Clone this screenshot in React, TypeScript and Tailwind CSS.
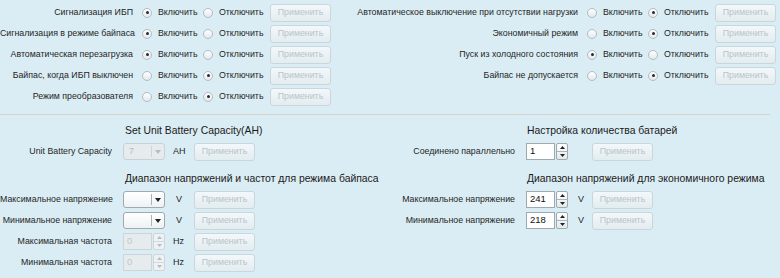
import React from "react";

function Radio({ checked, label }: { checked: boolean; label: string }) {
  return (
    <div className="flex items-center gap-[6px]">
      <span className="w-[10px] h-[10px] rounded-full border border-[#b3bcc1] bg-gradient-to-b from-white to-[#e3e9ec] grid place-items-center shrink-0">
        {checked && <span className="w-[3px] h-[3px] rounded-full bg-[#2a2a2a]" />}
      </span>
      <span className="text-[8.8px] text-[#1f1f1f] whitespace-nowrap">{label}</span>
    </div>
  );
}

function ApplyBtn() {
  return (
    <div className="w-[61px] h-[18px] rounded-[3px] border border-[#c9d6dc] bg-gradient-to-b from-[#f3f8fa] to-[#e3ecf0] text-[8.8px] text-[#b7c4ca] grid place-items-center shrink-0">
      Применить
    </div>
  );
}

function ToggleRow({ label, on, labelW }: { label: string; on: boolean; labelW: string }) {
  return (
    <div className="h-[21px] flex items-center">
      <div className={`${labelW} shrink-0 text-right text-[8.8px] text-[#1f1f1f] whitespace-nowrap pr-[9px]`}>{label}</div>
      <div className="w-[61px] shrink-0">
        <Radio checked={on} label="Включить" />
      </div>
      <div className="w-[67px] shrink-0">
        <Radio checked={!on} label="Отключить" />
      </div>
      <ApplyBtn />
    </div>
  );
}

function Combo({ value, disabled }: { value?: string; disabled?: boolean }) {
  return (
    <div
      className={`w-[42px] h-[17px] rounded-[3px] border flex items-center ${
        disabled ? "border-[#c8d2d6] bg-[#e6ebed]" : "border-[#9eaab0] bg-gradient-to-b from-white to-[#eef2f4]"
      }`}
    >
      <div className={`flex-1 pl-[5px] text-[8.8px] ${disabled ? "text-[#b4bcc0]" : "text-[#222]"}`}>{value}</div>
      <div className={`w-px h-[11px] ${disabled ? "bg-[#cdd5d9]" : "bg-[#aab4b9]"}`} />
      <div className="w-[12px] grid place-items-center">
        <svg width="6" height="4" viewBox="0 0 6 4">
          <polygon points="0,0 6,0 3,4" fill={disabled ? "#b4bcc0" : "#222"} />
        </svg>
      </div>
    </div>
  );
}

function Spin({ value, disabled }: { value: string; disabled?: boolean }) {
  const c = disabled ? "#b4bcc0" : "#222";
  return (
    <div className="flex items-center h-[17px]">
      <div
        className={`w-[29px] h-[17px] border flex items-center pl-[3px] text-[9.5px] ${
          disabled ? "border-[#ccd5d9] bg-[#e6ebed] text-[#c0c7ca]" : "border-[#9eaab0] bg-white text-[#111]"
        }`}
      >
        {value}
      </div>
      <div
        className={`w-[12px] h-[17px] ml-px rounded-[2px] border flex flex-col ${
          disabled ? "border-[#cdd6da] bg-[#eef2f4]" : "border-[#9eaab0] bg-gradient-to-b from-white to-[#e4eaed]"
        }`}
      >
        <div className="flex-1 grid place-items-center">
          <svg width="5" height="3" viewBox="0 0 5 3">
            <polygon points="0,3 5,3 2.5,0" fill={c} />
          </svg>
        </div>
        <div className={`h-px ${disabled ? "bg-[#d3dadd]" : "bg-[#aab4b9]"}`} />
        <div className="flex-1 grid place-items-center">
          <svg width="5" height="3" viewBox="0 0 5 3">
            <polygon points="0,0 5,0 2.5,3" fill={c} />
          </svg>
        </div>
      </div>
    </div>
  );
}

function FieldRow({
  label,
  labelW,
  control,
  unit,
  unitW,
}: {
  label: string;
  labelW: string;
  control: React.ReactNode;
  unit: string;
  unitW: string;
}) {
  return (
    <div className="h-[21px] flex items-center">
      <div className={`${labelW} shrink-0 text-right text-[8.8px] text-[#1f1f1f] whitespace-nowrap pr-[11px]`}>{label}</div>
      <div className="w-[42px] shrink-0">{control}</div>
      <div className={`${unitW} shrink-0 text-[9px] text-[#1f1f1f]`}>{unit}</div>
      <ApplyBtn />
    </div>
  );
}

function Heading({ children, ml }: { children: React.ReactNode; ml: string }) {
  return <div className={`h-[20px] flex items-center ${ml} text-[10.4px] text-[#1a1a1a] whitespace-nowrap`}>{children}</div>;
}

export default function App() {
  return (
    <div className="w-[780px] h-[278px] bg-[#dbedf4] overflow-hidden font-['Liberation_Sans',Arial,sans-serif]">
      <div className="flex pt-[2px]">
        <div className="w-[340px]">
          <ToggleRow label="Сигнализация ИБП" on labelW="w-[142px]" />
          <ToggleRow label="Сигнализация в режиме байпаса" on labelW="w-[142px]" />
          <ToggleRow label="Автоматическая перезагрузка" on labelW="w-[142px]" />
          <ToggleRow label="Байпас, когда ИБП выключен" on={false} labelW="w-[142px]" />
          <ToggleRow label="Режим преобразователя" on={false} labelW="w-[142px]" />
        </div>
        <div>
          <ToggleRow label="Автоматическое выключение при отсутствии нагрузки" on={false} labelW="w-[247px]" />
          <ToggleRow label="Экономичный режим" on={false} labelW="w-[247px]" />
          <ToggleRow label="Пуск из холодного состояния" on labelW="w-[247px]" />
          <ToggleRow label="Байпас не допускается" on={false} labelW="w-[247px]" />
        </div>
      </div>

      <div className="mt-[7px] w-[770px] h-px bg-[#d8d2c8]" />

      <div className="flex pt-[6px]">
        <div className="w-[390px] shrink-0">
          <Heading ml="ml-[125px]">Set Unit Battery Capacity(AH)</Heading>
          <FieldRow label="Unit Battery Capacity" labelW="w-[123px]" control={<Combo value="7" disabled />} unit="AH" unitW="w-[29px] pl-[8px]" />
          <div className="mt-[7px]">
            <Heading ml="ml-[125px]">Диапазон напряжений и частот для режима байпаса</Heading>
          </div>
          <FieldRow label="Максимальное напряжение" labelW="w-[123px]" control={<Combo />} unit="V" unitW="w-[29px] pl-[11px]" />
          <FieldRow label="Минимальное напряжение" labelW="w-[123px]" control={<Combo />} unit="V" unitW="w-[29px] pl-[11px]" />
          <FieldRow label="Максимальная частота" labelW="w-[123px]" control={<Spin value="0" disabled />} unit="Hz" unitW="w-[29px] pl-[8px]" />
          <FieldRow label="Минимальная частота" labelW="w-[123px]" control={<Spin value="0" disabled />} unit="Hz" unitW="w-[29px] pl-[8px]" />
        </div>
        <div>
          <Heading ml="ml-[137px]">Настройка количества батарей</Heading>
          <FieldRow label="Соединено параллельно" labelW="w-[136px]" control={<Spin value="1" />} unit="" unitW="w-[24px]" />
          <div className="mt-[7px]">
            <Heading ml="ml-[137px]">Диапазон напряжений для экономичного режима</Heading>
          </div>
          <FieldRow label="Максимальное напряжение" labelW="w-[136px]" control={<Spin value="241" />} unit="V" unitW="w-[24px] pl-[10px]" />
          <FieldRow label="Минимальное напряжение" labelW="w-[136px]" control={<Spin value="218" />} unit="V" unitW="w-[24px] pl-[10px]" />
        </div>
      </div>
    </div>
  );
}
